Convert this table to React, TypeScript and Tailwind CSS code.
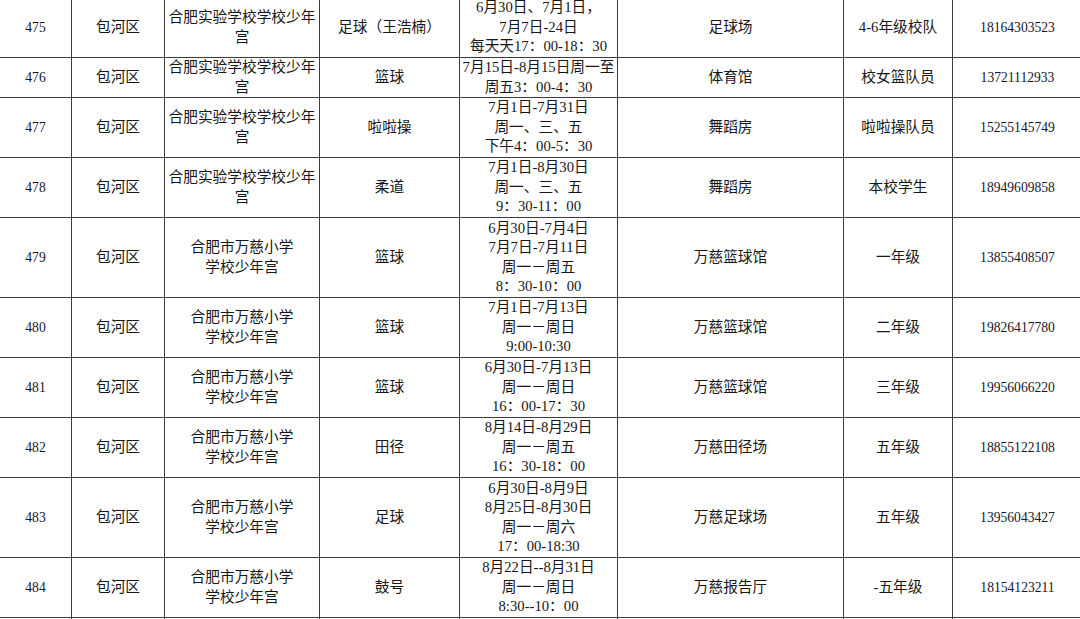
const rows = [
  { no: '475', h: 60, school: ['合肥实验学校学校少年', '宫'], sport: '足球（王浩楠）', time: ['6月30日、7月1日，', '7月7日-24日', '每天天17：00-18：30'], place: '足球场', who: '4-6年级校队', tel: '18164303523' },
  { no: '476', h: 40, school: ['合肥实验学校学校少年', '宫'], sport: '篮球', time: ['7月15日-8月15日周一至', '周五3：00-4：30'], place: '体育馆', who: '校女篮队员', tel: '13721112933' },
  { no: '477', h: 60, school: ['合肥实验学校学校少年', '宫'], sport: '啦啦操', time: ['7月1日-7月31日', '周一、三、五', '下午4：00-5：30'], place: '舞蹈房', who: '啦啦操队员', tel: '15255145749' },
  { no: '478', h: 60, school: ['合肥实验学校学校少年', '宫'], sport: '柔道', time: ['7月1日-8月30日', '周一、三、五', '9：30-11：00'], place: '舞蹈房', who: '本校学生', tel: '18949609858' },
  { no: '479', h: 80, school: ['合肥市万慈小学', '学校少年宫'], sport: '篮球', time: ['6月30日-7月4日', '7月7日-7月11日', '周一－周五', '8：30-10：00'], place: '万慈篮球馆', who: '一年级', tel: '13855408507' },
  { no: '480', h: 60, school: ['合肥市万慈小学', '学校少年宫'], sport: '篮球', time: ['7月1日-7月13日', '周一－周日', '9:00-10:30'], place: '万慈篮球馆', who: '二年级', tel: '19826417780' },
  { no: '481', h: 60, school: ['合肥市万慈小学', '学校少年宫'], sport: '篮球', time: ['6月30日-7月13日', '周一－周日', '16：00-17：30'], place: '万慈篮球馆', who: '三年级', tel: '19956066220' },
  { no: '482', h: 60, school: ['合肥市万慈小学', '学校少年宫'], sport: '田径', time: ['8月14日-8月29日', '周一－周五', '16：30-18：00'], place: '万慈田径场', who: '五年级', tel: '18855122108' },
  { no: '483', h: 80, school: ['合肥市万慈小学', '学校少年宫'], sport: '足球', time: ['6月30日-8月9日', '8月25日-8月30日', '周一－周六', '17：00-18:30'], place: '万慈足球场', who: '五年级', tel: '13956043427' },
  { no: '484', h: 60, school: ['合肥市万慈小学', '学校少年宫'], sport: '鼓号', time: ['8月22日--8月31日', '周一－周日', '8:30--10：00'], place: '万慈报告厅', who: '-五年级', tel: '18154123211' },
];

const cell = 'border border-[#3c3c3c] p-0 text-center align-middle';

export default function App() {
  return (
    <div className="w-[1080px] h-[619px] overflow-hidden bg-white">
      <table
        className="table-fixed border-collapse -ml-px -mt-[3px] w-[1083px] text-[14.7px] leading-[19.5px] text-[#161616]"
        style={{ fontFamily: '"Liberation Serif", "Noto Sans CJK SC", serif' }}
      >
        <colgroup>
          <col className="w-[72px]" />
          <col className="w-[93px]" />
          <col className="w-[155px]" />
          <col className="w-[140px]" />
          <col className="w-[158px]" />
          <col className="w-[226px]" />
          <col className="w-[109px]" />
          <col className="w-[130px]" />
        </colgroup>
        <tbody>
          {rows.map((r) => (
            <tr key={r.no}>
              <td className={`${cell} text-[13.6px] text-[#15152a]`} style={{ height: r.h }}>{r.no}</td>
              <td className={cell}>包河区</td>
              <td className={cell}>
                {r.school.map((s, i) => (
                  <div key={i} className="whitespace-nowrap">{s}</div>
                ))}
              </td>
              <td className={cell}>{r.sport}</td>
              <td className={cell}>
                {r.time.map((t, i) => (
                  <div key={i} className="whitespace-nowrap">{t}</div>
                ))}
              </td>
              <td className={cell}>{r.place}</td>
              <td className={cell}>{r.who}</td>
              <td className={`${cell} text-[13.6px] text-[#15152a]`}>{r.tel}</td>
            </tr>
          ))}
          <tr>
            <td className={cell} style={{ height: 40 }}></td>
            <td className={cell}></td>
            <td className={cell}></td>
            <td className={cell}></td>
            <td className={cell}></td>
            <td className={cell}></td>
            <td className={cell}></td>
            <td className={cell}></td>
          </tr>
        </tbody>
      </table>
    </div>
  );
}
